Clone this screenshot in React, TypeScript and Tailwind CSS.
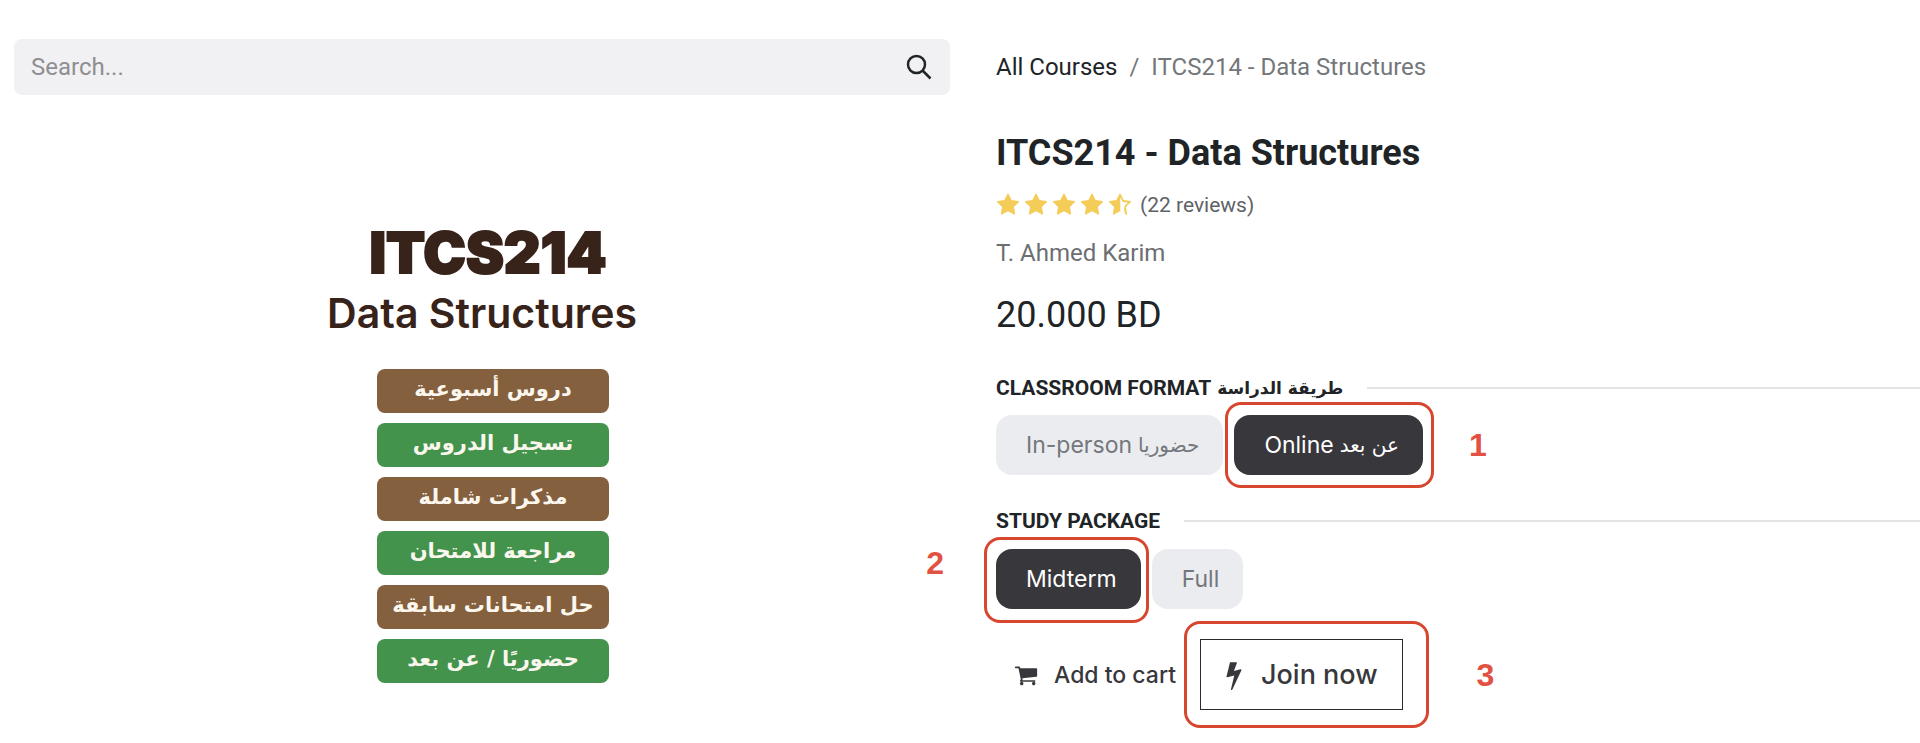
import React from "react";

const topics = [
  { text: "دروس أسبوعية", color: "bg-[#84603e]" },
  { text: "تسجيل الدروس", color: "bg-[#43934c]" },
  { text: "مذكرات شاملة", color: "bg-[#84603e]" },
  { text: "مراجعة للامتحان", color: "bg-[#43934c]" },
  { text: "حل امتحانات سابقة", color: "bg-[#84603e]" },
  { text: "حضوريًا / عن بعد", color: "bg-[#43934c]" },
];

const STAR =
  "M1728 647q0 22-26 48l-363 354 86 500q1 7 1 20 0 21-10.5 35.5t-30.5 14.5q-19 0-40-12l-449-236-449 236q-22 12-40 12-21 0-31.5-14.5t-10.5-35.5q0-6 2-20l86-500-364-354q-25-27-25-48 0-37 56-46l502-73 225-455q19-41 49-41t49 41l225 455 502 73q56 9 56 46z";
const STAR_HALF =
  "M1250 957l238-233-329-48-66-10-30-60-147-298v1081l59 31 293 155-56-328-12-66zm452-262l-363 354 86 500q5 33-6 51.5t-34 18.5q-17 0-40-12l-449-236-449 236q-23 12-40 12-23 0-34-18.5t-6-51.5l86-500-364-354q-32-32-23-59.5t54-34.5l502-73 225-455q20-41 49-41 28 0 49 41l225 455 502 73q45 7 54 34.5t-24 59.5z";
const CART =
  "M704 1536q0 52-38 90t-90 38-90-38-38-90 38-90 90-38 90 38 38 90zm896 0q0 52-38 90t-90 38-90-38-38-90 38-90 90-38 90 38 38 90zm128-1088v512q0 24-16.5 42.5t-40.5 21.5l-1044 122q13 60 13 70 0 16-24 64h920q26 0 45 19t19 45-19 45-45 19h-1024q-26 0-45-19t-19-45q0-11 8-31.5t16-36 21.5-40 15.5-29.5l-177-823h-204q-26 0-45-19t-19-45 19-45 45-19h256q16 0 28.5 6.5t19.5 15.5 13 24.5 8 26 5.5 29.5 4.5 26h1201q26 0 45 19t19 45z";
const BOLT =
  "M1333 566q18 20 7 44l-540 1157q-13 25-42 25-4 0-14-2-17-5-25.5-19t-4.5-30l197-808-406 101q-4 1-12 1-18 0-31-11-18-15-13-39l201-825q4-14 16-23t28-9h328q19 0 32 12.5t13 29.5q0 8-5 18l-171 463 396-98q8-2 12-2 19 0 34 15z";

function Glyph({ d, className }: { d: string; className: string }) {
  return (
    <svg viewBox="0 0 1792 1792" fill="currentColor" className={className} aria-hidden="true">
      <path d={d} />
    </svg>
  );
}

// Red outline and step number drawn over a control
function Callout({
  step,
  ring,
  label,
}: {
  step: number;
  ring: string;
  label: string;
}) {
  return (
    <>
      <span
        className={`pointer-events-none absolute rounded-2xl border-3 border-[#d7472f] ${ring}`}
      />
      <span
        className={`pointer-events-none absolute font-['Liberation_Sans',sans-serif] text-[32px] leading-8 font-bold text-[#e25142] ${label}`}
      >
        {step}
      </span>
    </>
  );
}

function Option({
  name,
  text,
  arabic,
  checked,
  children,
}: {
  name: string;
  text: string;
  arabic?: string;
  checked?: boolean;
  children?: React.ReactNode;
}) {
  return (
    <label className="relative flex h-[60px] cursor-pointer items-center gap-1.5 rounded-2xl bg-[#ebecef] pr-6 pl-[30px] font-['Inter',sans-serif] text-[23px] leading-8 text-[#74777c] has-checked:bg-[#38373c] has-checked:text-white">
      <input type="radio" name={name} defaultChecked={checked} className="sr-only" />
      <span>{text}</span>
      {arabic && (
        <span lang="ar" className="font-['DejaVu_Sans',sans-serif] text-xl">
          {arabic}
        </span>
      )}
      {children}
    </label>
  );
}

function Legend({ children }: { children: React.ReactNode }) {
  return (
    <div className="flex items-center gap-6">
      <h2 className="flex items-center gap-1.5 text-[21px] leading-7 font-bold">{children}</h2>
      <hr className="flex-1 border-t-2 border-[#e4e4e4]" />
    </div>
  );
}

export default function App() {
  return (
    <main className="grid grid-cols-2 overflow-x-hidden bg-white pb-8 font-['Roboto',sans-serif] text-[#212427]">
      <section className="pt-[39px] pr-2.5 pl-3.5">
        <form
          role="search"
          className="flex h-14 items-center rounded-lg bg-[#f1f1f3] pr-[18px] pl-[17px]"
          onSubmit={(e) => e.preventDefault()}
        >
          <input
            type="text"
            aria-label="Search"
            placeholder="Search..."
            className="min-w-0 flex-1 bg-transparent text-2xl outline-none placeholder:text-[#8e8f91]"
          />
          <button type="submit" aria-label="Submit search">
            <svg viewBox="0 0 26 26" className="size-[26px]" fill="none" stroke="currentColor" strokeWidth="2.5">
              <circle cx="10.5" cy="10.5" r="8.5" />
              <path d="M16.5 16.5 24.5 24.5" />
            </svg>
          </button>
        </form>

        <div className="mt-[126px] flex flex-col items-center text-[#38231a]">
          <p className="pl-3 font-['Inter',sans-serif] text-[57px] leading-[64px] font-black [-webkit-text-stroke:2px_currentColor]">
            ITCS214
          </p>
          <p className="font-['Inter',sans-serif] text-[41px] leading-[56px] font-semibold">Data Structures</p>
          <ul className="mt-7 flex flex-col gap-2.5 pl-[22px]">
            {topics.map((t) => (
              <li
                key={t.text}
                dir="rtl"
                lang="ar"
                className={`flex h-11 w-[232px] items-center justify-center rounded-lg pb-1 font-['DejaVu_Sans',sans-serif] text-[21px] leading-8 font-bold whitespace-nowrap text-[#fbf7ef] ${t.color}`}
              >
                {t.text}
              </li>
            ))}
          </ul>
        </div>
      </section>

      <section className="pt-[51px] pl-9">
        <nav aria-label="Breadcrumb" className="flex gap-3 text-2xl leading-8 text-[#74777a]">
          <a href="#" className="text-[#212427]">
            All Courses
          </a>
          <span>/</span>
          <span>ITCS214 - Data Structures</span>
        </nav>

        <h1 className="mt-12 text-4xl leading-[44px] font-bold">ITCS214 - Data Structures</h1>
        <div className="mt-[18px] flex items-center text-[21px] leading-6 text-[#606265]">
          <div className="flex gap-1 text-[#f4cd58]" role="img" aria-label="4.5 out of 5">
            {[0, 1, 2, 3].map((i) => (
              <Glyph key={i} d={STAR} className="size-6" />
            ))}
            <Glyph d={STAR_HALF} className="size-6" />
          </div>
          <span className="ml-2">(22 reviews)</span>
        </div>
        <p className="mt-5 text-2xl leading-8 text-[#6c6e71]">T. Ahmed Karim</p>
        <p className="mt-6 text-4xl leading-[44px]">20.000 BD</p>

        <div className="mt-[37px]">
          <Legend>
            CLASSROOM FORMAT
            <span lang="ar" className="font-['DejaVu_Sans',sans-serif] text-[17px]">
              طريقة الدراسة
            </span>
          </Legend>
          <div className="mt-[13px] flex gap-[11px]">
            <Option name="format" text="In-person" arabic="حضوريا" />
            <Option name="format" text="Online" arabic="عن بعد" checked>
              <Callout step={1} ring="-top-[13px] -bottom-[13px] -left-[9px] -right-[11px]" label="top-3.5 left-full ml-[46px]" />
            </Option>
          </div>
        </div>

        <div className="mt-8">
          <Legend>STUDY PACKAGE</Legend>
          <div className="mt-[14px] flex gap-[11px]">
            <Option name="package" text="Midterm" checked>
              <Callout step={2} ring="-top-3 -bottom-3.5 -left-3 -right-2" label="-top-0.5 right-full mr-[52px]" />
            </Option>
            <Option name="package" text="Full" />
          </div>
        </div>

        <div className="mt-[30px] flex items-center gap-6 font-['Inter',sans-serif] font-medium text-[#38373c]">
          <button type="button" className="flex items-center gap-4 pl-[18px] text-[23px] leading-8">
            <Glyph d={CART} className="size-6" />
            Add to cart
          </button>
          <div className="relative">
            <button
              type="button"
              className="flex h-[71px] items-center gap-3 border border-[#2b2b2d] pr-6 pl-[18px] text-[27px] leading-8"
            >
              <Glyph d={BOLT} className="size-[30px]" />
              Join now
            </button>
            <Callout step={3} ring="-top-[18px] -bottom-[18px] -left-4 -right-[26px]" label="top-5 left-full ml-[74px]" />
          </div>
        </div>
      </section>
    </main>
  );
}
